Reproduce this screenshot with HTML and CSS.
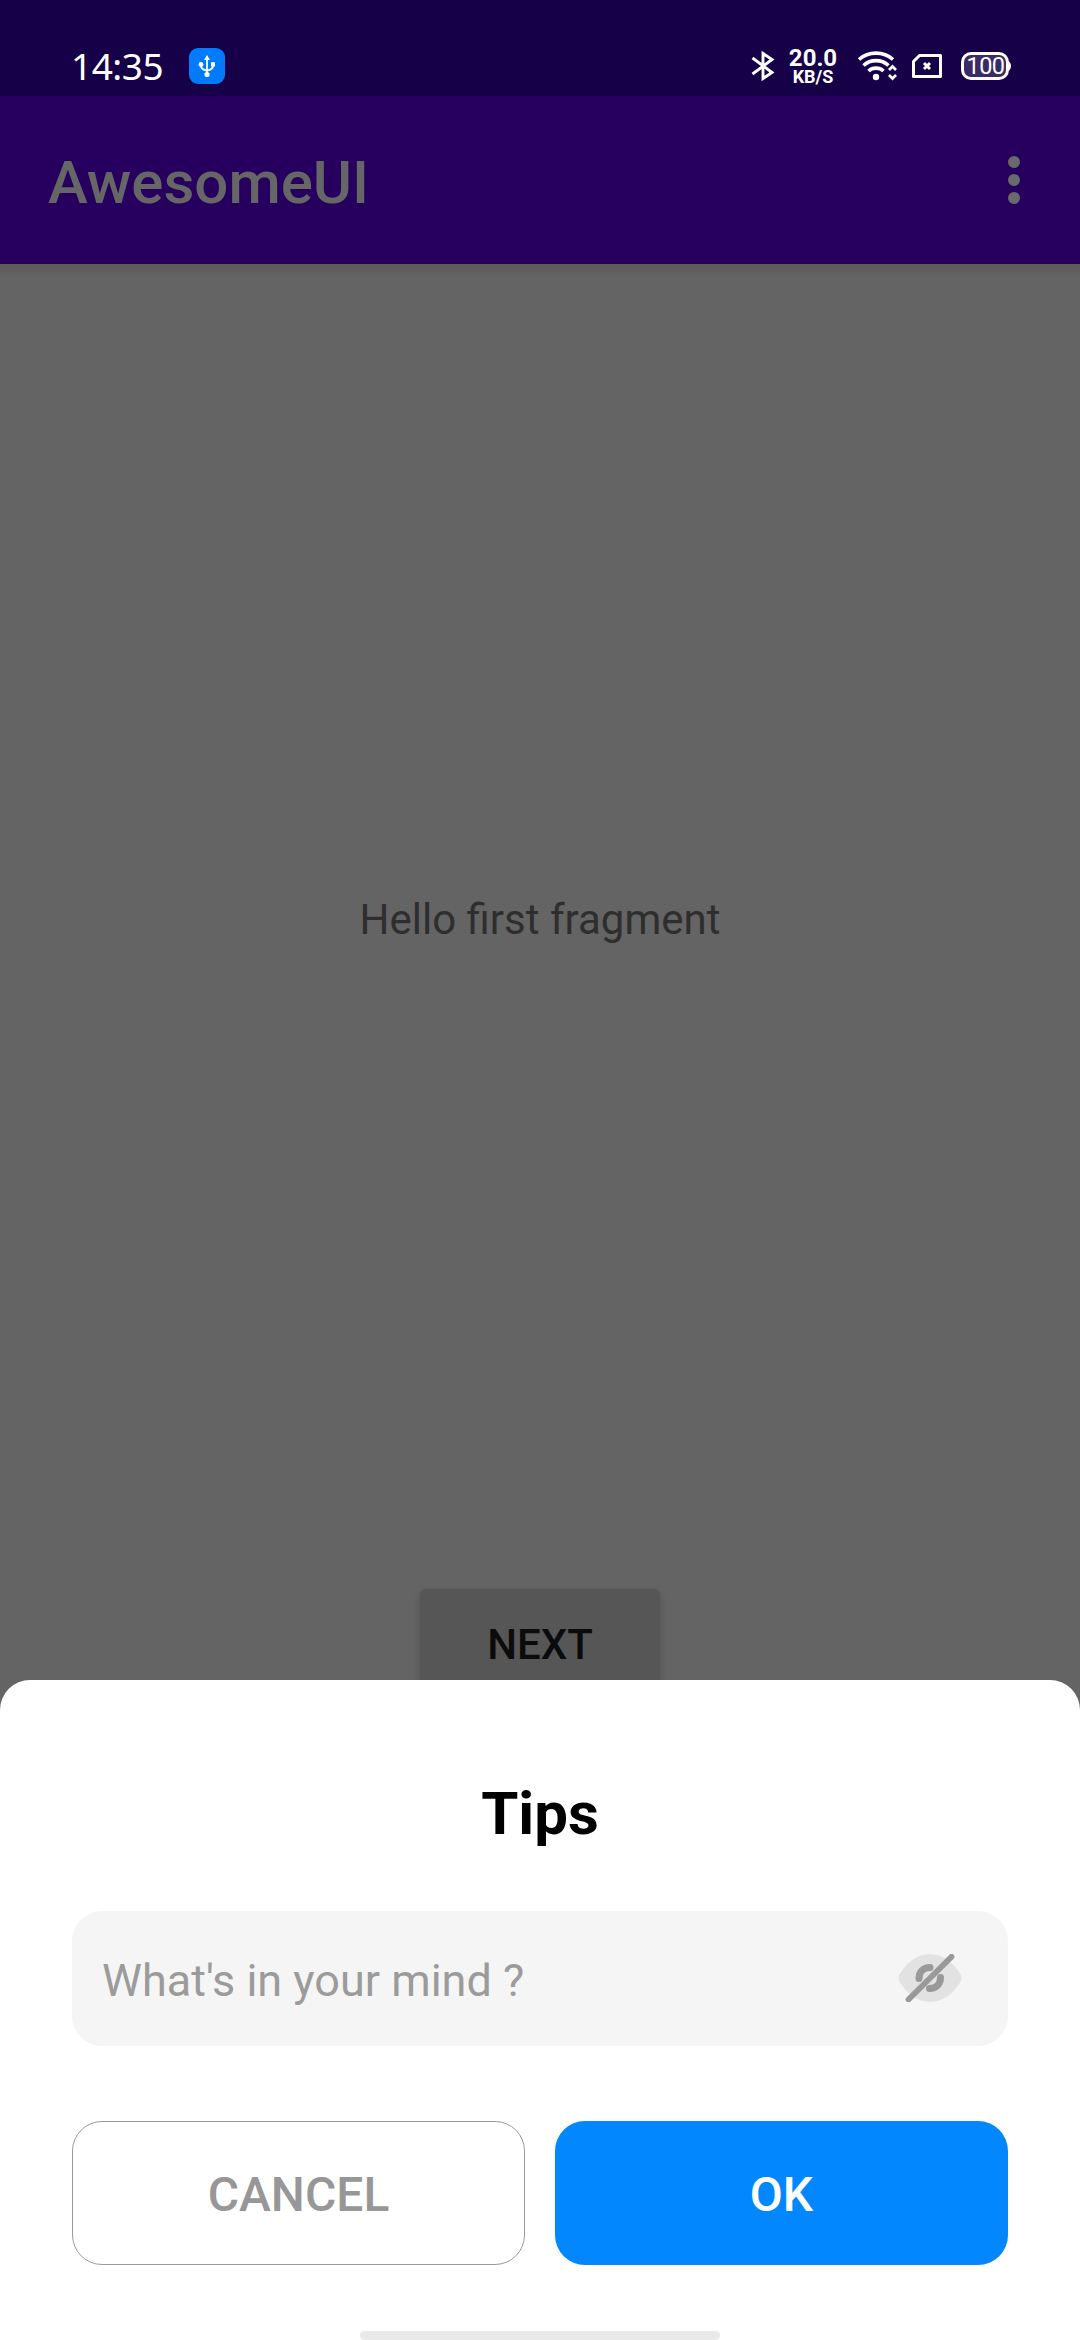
FILE: index.html
```html
<!DOCTYPE html>
<html lang="en">
<head>
<meta charset="utf-8">
<title>AwesomeUI</title>
<link rel="stylesheet" href="styles.css">
</head>
<body>
<div class="screen">
  <header class="status-bar">
    <span class="clock">14:35</span>
    <svg class="usb" width="36" height="36" viewBox="0 0 36 36">
      <rect width="36" height="36" rx="9" fill="#007bff"/>
      <g fill="none" stroke="#fff" stroke-width="1.8">
        <path d="M18 10v17M12 16v1.500c0 3 2.500 4.500 6 5 3.500-.5 6-2 6-5V16"/>
      </g>
      <path d="M18 7l3 5h-6z" fill="#fff"/>
      <circle cx="12" cy="16.500" r="2.400" fill="#fff"/>
      <path d="M22 14.200h4v4.400h-4z" fill="#fff"/>
      <circle cx="18" cy="26.500" r="2.600" fill="#fff"/>
    </svg>
    <div class="status-icons">
      <svg class="bluetooth" width="24" height="32" viewBox="0 0 24 32" fill="none" stroke="#fff" stroke-width="2.900">
        <path d="M1.500 8L21 22.500 12 28.500V3.500L21 9.500 1.500 24" stroke-linejoin="miter"/>
      </svg>
      <div class="speed"><span class="rate">20.0</span><span class="unit">KB/S</span></div>
      <svg class="wifi" width="42" height="32" viewBox="0 0 42 32" fill="none" stroke="#fff" stroke-width="3.600">
        <path d="M2 9.500C11.500 1 26.500 1 36 9.500"/>
        <path d="M6.500 15.500C13.500 9 24.500 9 31.500 15.500"/>
        <path d="M11.500 21C15.500 17.200 22.500 17.200 26.500 21"/>
        <circle cx="19" cy="27" r="3.200" fill="#fff" stroke="none"/>
        <path d="M32 20l3.500-3.500L39 20M32 25l3.500 3.500L39 25" stroke-width="2.700"/>
      </svg>
      <svg class="sim" width="30" height="24" viewBox="0 0 30 24" fill="none" stroke="#fff" stroke-width="3">
        <path d="M7.500 1.500h21v21h-27v-15z" stroke-linejoin="round"/>
        <path d="M12 9l6 6M18 9l-6 6" stroke-width="3"/>
      </svg>
      <div class="battery">
        <svg class="battery-shell" width="50" height="28" viewBox="0 0 50 28">
          <rect x="1.500" y="1.500" width="45" height="25" rx="8.500" fill="#3b2a66" stroke="#fff" stroke-width="3"/>
          <path d="M47 9c4 1.500 4 8.500 0 10z" fill="#fff"/>
        </svg>
        <span class="level">100</span>
      </div>
    </div>
  </header>

  <div class="app-bar">
    <h1 class="app-title">AwesomeUI</h1>
    <svg class="overflow" width="12" height="48" viewBox="0 0 12 48" fill="#6a6a6a">
      <circle cx="6" cy="6" r="6"/><circle cx="6" cy="24" r="6"/><circle cx="6" cy="42" r="6"/>
    </svg>
  </div>

  <main class="fragment">
    <p class="hello">Hello first fragment</p>
    <button class="next">NEXT</button>
  </main>

  <section class="sheet">
    <h2 class="sheet-title">Tips</h2>
    <div class="field">
      <input class="field-input" type="text" placeholder="What's in your mind ?">
      <svg class="eye" width="64" height="48" viewBox="0 0 64 48">
        <path d="M2 19.500C9 8.500 19 0 32 0s23 8.500 30 19.500c2 3.300 2 5.700 0 9C55 39.500 45 48 32 48S9 39.500 2 28.500c-2-3.300-2-5.700 0-9z" fill="#e2e2e2"/>
        <g fill="none" stroke="#999" stroke-linecap="round">
          <path d="M21 24.500C21 18 25.500 13.500 32 13.500M42.500 23.500C42.500 30 38 34.500 31.500 34.500" stroke-width="7"/>
          <path d="M10.500 45.500L53.500 2.700" stroke-width="5.800"/>
        </g>
      </svg>
    </div>
    <div class="actions">
      <button class="action cancel">CANCEL</button>
      <button class="action ok">OK</button>
    </div>
    <div class="home-indicator"></div>
  </section>
</div>
</body>
</html>
```
FILE: styles.css
```css
* {
  box-sizing: border-box;
}

body {
  margin: 0;
  font-family: Roboto, "Liberation Sans", sans-serif;
}

h1,
h2,
p {
  margin: 0;
}

button,
input {
  border: 0;
  font-family: inherit;
}

.screen {
  position: relative;
  display: flex;
  flex-direction: column;
  width: 1080px;
  height: 2340px;
  overflow: hidden;
  background: #646464;
}

.status-bar {
  display: flex;
  align-items: center;
  flex: none;
  height: 96px;
  padding: 36px 69px 0 71px;
  background: #160048;
  color: #fff;
}

.clock {
  width: 118px;
  font: 400 37px/60px "Noto Sans", sans-serif;
  letter-spacing: -0.5px;
}

.status-icons {
  display: flex;
  align-items: center;
  margin-left: auto;
}

.bluetooth {
  margin-right: 14px;
}

.speed {
  display: flex;
  flex-direction: column;
  align-items: center;
  width: 48px;
  margin: 1px 20px 0 0;
  font-weight: 700;
}

.rate {
  font-size: 24px;
  line-height: 20px;
}

.unit {
  font-size: 18px;
  line-height: 17px;
}

.wifi {
  margin-right: 13px;
}

.sim {
  margin-right: 19px;
}

.battery {
  position: relative;
  width: 50px;
  height: 28px;
}

.battery-shell {
  display: block;
}

.level {
  position: absolute;
  inset: 0 1px 0 0;
  font: 400 23.5px/28px Roboto, sans-serif;
  letter-spacing: -0.5px;
  text-align: center;
}

.app-bar {
  display: flex;
  align-items: center;
  justify-content: space-between;
  flex: none;
  height: 168px;
  padding: 0 60px 0 48px;
  background: #27005f;
}

.app-title {
  padding-top: 5px;
  color: #666;
  font-size: 60px;
  font-weight: 500;
}

.fragment {
  display: flex;
  flex-direction: column;
  align-items: center;
  flex: 1;
  padding-top: 631px;
  background: linear-gradient(#5c5c5c, #646464 14px);
}

.hello {
  color: #2e2e2e;
  font-size: 42px;
  line-height: 50px;
}

.next {
  width: 240px;
  height: 108px;
  margin-top: 644px;
  padding: 3px 0 0;
  border-radius: 6px;
  background: #565656;
  box-shadow: 0 2px 6px rgba(0, 0, 0, 0.16);
  color: #0b0b0b;
  font-size: 42px;
  font-weight: 500;
}

.sheet {
  position: absolute;
  inset: 1680px 0 0;
  display: flex;
  flex-direction: column;
  padding: 98px 72px 0;
  border-radius: 30px 30px 0 0;
  background: #fff;
}

.sheet-title {
  color: #000;
  font-size: 60px;
  font-weight: 700;
  line-height: 72px;
  text-align: center;
}

.field {
  display: flex;
  align-items: center;
  justify-content: space-between;
  height: 135px;
  margin-top: 61px;
  padding: 0 46px 0 30px;
  border-radius: 30px;
  background: #f5f5f5;
}

.field-input {
  width: 600px;
  height: 60px;
  padding: 4px 0 0;
  background: none;
  font-size: 45px;
}

.field-input::placeholder {
  color: #9b9b9b;
}

.eye {
  margin-bottom: 1px;
}

.actions {
  display: grid;
  grid-template-columns: 1fr 1fr;
  gap: 30px;
  margin-top: 75px;
}

.action {
  height: 144px;
  padding: 3px 0 0;
  border-radius: 30px;
  font-size: 48px;
  font-weight: 500;
}

.cancel {
  border: 1px solid #999;
  background: #fff;
  color: #979797;
}

.ok {
  background: #0287ff;
  color: #fff;
}

.home-indicator {
  width: 360px;
  height: 9px;
  margin: auto auto 0;
  border-radius: 5px;
  background: #e9e9e9;
}
```
